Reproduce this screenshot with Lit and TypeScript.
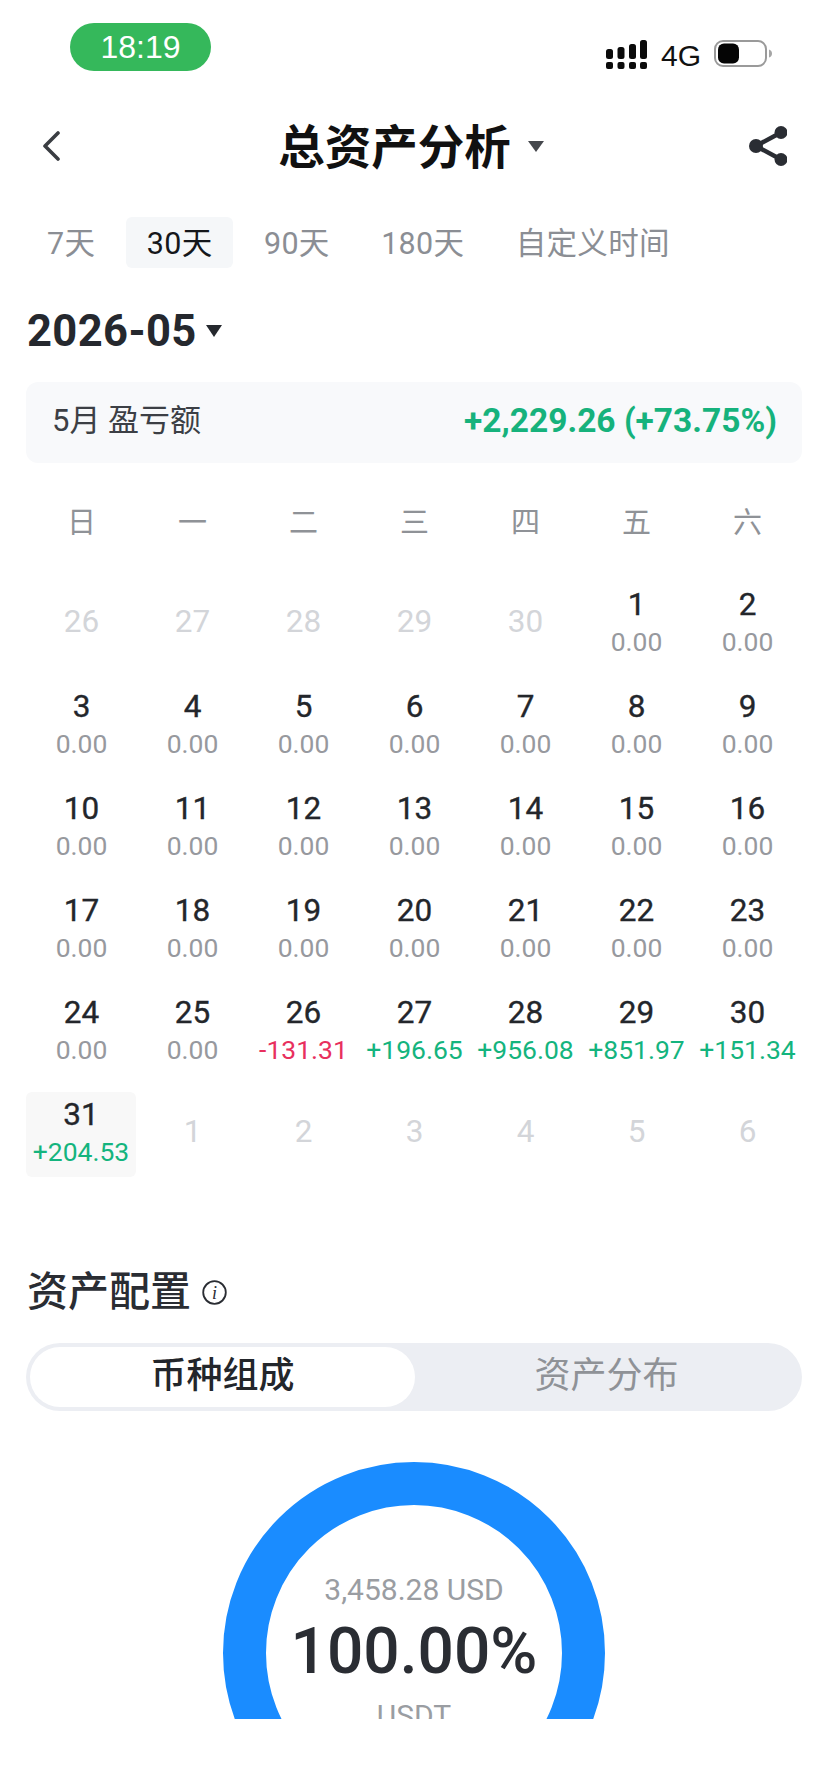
import { LitElement, html, css, svg } from "lit";
import { customElement } from "lit/decorators.js";

type Day = { d: number; v?: string; kind?: "up" | "down"; muted?: boolean; sel?: boolean };

const W = ["日", "一", "二", "三", "四", "五", "六"];
const gains: Record<number, [string, "up" | "down"]> = {
  26: ["-131.31", "down"],
  27: ["+196.65", "up"],
  28: ["+956.08", "up"],
  29: ["+851.97", "up"],
  30: ["+151.34", "up"],
  31: ["+204.53", "up"],
};
const days: Day[] = [
  ...[26, 27, 28, 29, 30].map((d) => ({ d, muted: true })),
  ...Array.from({ length: 31 }, (_, i) => {
    const d = i + 1;
    const g = gains[d];
    return { d, v: g ? g[0] : "0.00", kind: g ? g[1] : undefined, sel: d === 31 } as Day;
  }),
  ...[1, 2, 3, 4, 5, 6].map((d) => ({ d, muted: true })),
];

@customElement("app-root")
export class AppRoot extends LitElement {
  static styles = css`
    :host {
      display: block;
      width: 828px;
      height: 1792px;
      background: #fff;
      overflow: hidden;
      font-family: Roboto, "Noto Sans CJK SC", sans-serif;
      color: #23262b;
    }
    .status {
      height: 108px;
      box-sizing: border-box;
      padding: 23px 56px 0 70px;
      display: flex;
      justify-content: space-between;
      align-items: flex-start;
    }
    .pill {
      width: 141px;
      height: 48px;
      border-radius: 24px;
      background: #35b85b;
      color: #fff;
      font: 32px/48px "Liberation Sans", sans-serif;
      text-align: center;
    }
    .sys {
      display: flex;
      align-items: flex-start;
      margin-top: 17px;
    }
    .net {
      font: 30px/28px "Liberation Sans", sans-serif;
      color: #111;
      margin: 2px 13px 0 14px;
      width: 40px;
    }
    .header {
      height: 76px;
      box-sizing: border-box;
      padding: 0 41px 0 42px;
      display: grid;
      grid-template-columns: 1fr auto 1fr;
      align-items: center;
    }
    .share {
      justify-self: end;
      display: block;
    }
    .back {
      display: block;
    }
    .titlewrap {
      display: flex;
      align-items: center;
      margin-right: 7px;
    }
    .title {
      font-size: 46.5px;
      font-weight: 700;
      line-height: 60px;
      color: #111;
      padding-top: 3px;
    }
    .titlecaret {
      margin-left: 17px;
      display: block;
    }
    .tabs {
      margin: 33px 0 0 26px;
      display: flex;
      gap: 9.5px;
    }
    .tab {
      height: 51px;
      padding: 0 21px;
      line-height: 53px;
      font-size: 30.5px;
      letter-spacing: 0.3px;
      color: #8b8e94;
      border-radius: 6px;
    }
    .tab.on {
      background: #f5f7f9;
      color: #15171b;
    }
    .year {
      margin: 37px 0 0 27px;
      height: 50px;
      display: flex;
      align-items: center;
      gap: 9px;
    }
    .yeartext {
      font-size: 43.5px;
      line-height: 54px;
      font-weight: 700;
      color: #25282e;
      letter-spacing: 0.4px;
      padding-top: 4px;
    }
    .yearcaret {
      display: block;
      margin-top: 2px;
    }
    .banner {
      margin: 27px 26px 0 26px;
      height: 81px;
      box-sizing: border-box;
      padding: 0 25px 4px 26px;
      display: flex;
      justify-content: space-between;
      align-items: center;
      border-radius: 12px;
      background: #f8f9fb;
    }
    .blabel {
      font-size: 31px;
      line-height: 40px;
      color: #3c3f45;
    }
    .bvalue {
      font-size: 33.5px;
      line-height: 40px;
      font-weight: 700;
      color: #16b27c;
    }
    .weeks,
    .grid {
      margin-left: 26px;
      width: 777px;
      display: grid;
      grid-template-columns: repeat(7, 111px);
    }
    .weeks {
      margin-top: 39px;
      height: 40px;
      line-height: 42px;
      text-align: center;
      font-size: 29px;
      color: #8f9297;
    }
    .grid {
      margin-top: 40px;
      grid-auto-rows: 85px;
      row-gap: 17px;
    }
    .cell {
      text-align: center;
      box-sizing: border-box;
      padding-top: 5px;
      white-space: nowrap;
    }
    .cell.sel {
      background: #f8f8f8;
      border-radius: 6px;
      width: 110px;
    }
    .date {
      font-size: 31.5px;
      line-height: 36px;
      color: #23262b;
      -webkit-text-stroke: 0.35px #23262b;
    }
    .val {
      font-size: 26.5px;
      line-height: 38px;
      color: #97999e;
    }
    .val.up {
      color: #14b47e;
    }
    .val.down {
      color: #e8305e;
    }
    .cell.muted {
      padding-top: 22px;
    }
    .cell.muted .date {
      color: #d3d5d9;
      -webkit-text-stroke: 0;
    }
    .section {
      margin: 90px 0 0 27px;
      height: 50px;
      display: flex;
      align-items: center;
      gap: 11px;
    }
    .sectitle {
      font-size: 41px;
      line-height: 50px;
      font-weight: 500;
      color: #2a2d33;
    }
    .seg {
      margin: 26px 26px 0 26px;
      height: 68px;
      box-sizing: border-box;
      padding: 4px;
      border-radius: 34px;
      background: #eceef3;
      display: grid;
      grid-template-columns: 385px 1fr;
    }
    .opt {
      height: 60px;
      line-height: 58px;
      text-align: center;
      font-size: 36px;
      color: #8f9297;
    }
    .opt.on {
      background: #fff;
      border-radius: 30px;
      color: #23262b;
      font-weight: 500;
    }
    .gauge {
      margin-top: 51px;
      height: 257px;
      overflow: hidden;
      position: relative;
    }
    .gauge svg {
      position: absolute;
      left: 223px;
      top: 0;
    }
    .center {
      position: absolute;
      left: 0;
      right: 0;
      top: 0;
      text-align: center;
    }
    .amount {
      margin-top: 108px;
      font-size: 30px;
      line-height: 40px;
      color: #9a9da2;
    }
    .pct {
      margin-top: 4px;
      font-size: 64px;
      line-height: 76px;
      font-weight: 500;
      color: #2a2d33;
    }
    .coin {
      margin-top: 6px;
      font-size: 30px;
      line-height: 40px;
      color: #9a9da2;
    }
  `;

  private signal() {
    const cols = [606, 617.5, 629, 640];
    const tops = [49, 47, 44, 40];
    return html`<svg width="41" height="29" viewBox="606 40 41 29">
      ${cols.map(
        (x, i) => svg`
        <rect x=${x} y="62" width="7" height="7" rx="2" fill="#0b0b0b"></rect>
        <rect x=${x} y=${tops[i]} width="7" height=${59 - tops[i]} rx="2.5" fill="#0b0b0b"></rect>`
      )}
    </svg>`;
  }

  render() {
    return html`
      <div class="status">
        <div class="pill">18:19</div>
        <div class="sys">
          ${this.signal()}
          <div class="net">4G</div>
          <svg width="58" height="27" viewBox="0 0 58 27">
            <rect x="1" y="1" width="51" height="25" rx="8" fill="#fff" stroke="#9a9a9a" stroke-width="2"></rect>
            <rect x="4" y="3.5" width="21" height="20" rx="6" fill="#050505"></rect>
            <path d="M55 9.5q3 1 3 4t-3 4z" fill="#a5a5a5"></path>
          </svg>
        </div>
      </div>

      <div class="header">
        <svg class="back" width="18" height="30" viewBox="0 0 18 30">
          <path d="M16 2 3 15l13 13" fill="none" stroke="#3a3d42" stroke-width="3.6" stroke-linecap="round" stroke-linejoin="round"></path>
        </svg>
        <div class="titlewrap">
          <div class="title">总资产分析</div>
          <svg class="titlecaret" width="16" height="11" viewBox="0 0 16 11"><path d="M0 0h16L8 11z" fill="#45484d"></path></svg>
        </div>
        <svg class="share" width="38" height="40" viewBox="0 0 38 40">
          <path d="M32 6.5 7 20l25 13.500" fill="none" stroke="#2a2d33" stroke-width="4.500"></path>
          <circle cx="32" cy="6.500" r="6.500" fill="#2a2d33"></circle>
          <circle cx="7" cy="20" r="7" fill="#2a2d33"></circle>
          <circle cx="32" cy="33.500" r="6.500" fill="#2a2d33"></circle>
        </svg>
      </div>

      <div class="tabs">
        ${["7天", "30天", "90天", "180天", "自定义时间"].map(
          (t, i) => html`<div class="tab ${i === 1 ? "on" : ""}">${t}</div>`
        )}
      </div>

      <div class="year">
        <div class="yeartext">2026-05</div>
        <svg class="yearcaret" width="16" height="12" viewBox="0 0 16 12"><path d="M0 0h16L8 12z" fill="#25282e"></path></svg>
      </div>

      <div class="banner">
        <div class="blabel">5月 盈亏额</div>
        <div class="bvalue">+2,229.26 (+73.75%)</div>
      </div>

      <div class="weeks">${W.map((w) => html`<div>${w}</div>`)}</div>

      <div class="grid">
        ${days.map(
          (c) => html`<div class="cell ${c.muted ? "muted" : ""} ${c.sel ? "sel" : ""}">
            <div class="date">${c.d}</div>
            ${c.v ? html`<div class="val ${c.kind ?? ""}">${c.v}</div>` : ""}
          </div>`
        )}
      </div>

      <div class="section">
        <div class="sectitle">资产配置</div>
        <svg width="25" height="25" viewBox="0 0 25 25">
          <circle cx="12.500" cy="12.500" r="11.300" fill="none" stroke="#2a2d33" stroke-width="1.800"></circle>
          <text x="12.500" y="18.500" text-anchor="middle" font-family="Liberation Serif" font-style="italic" font-size="18" fill="#2a2d33">i</text>
        </svg>
      </div>

      <div class="seg">
        <div class="opt on">币种组成</div>
        <div class="opt">资产分布</div>
      </div>

      <div class="gauge">
        <svg width="382" height="382" viewBox="0 0 382 382">
          <circle cx="191" cy="191" r="169.500" fill="none" stroke="#1a8cff" stroke-width="43"></circle>
        </svg>
        <div class="center">
          <div class="amount">3,458.28 USD</div>
          <div class="pct">100.00%</div>
          <div class="coin">USDT</div>
        </div>
      </div>
    `;
  }
}
